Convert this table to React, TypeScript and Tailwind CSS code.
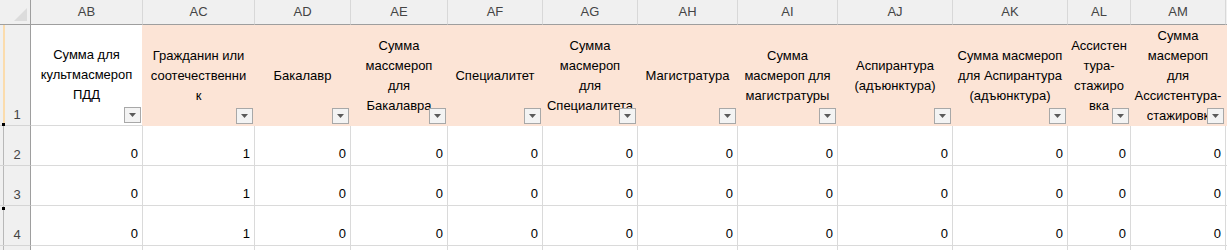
import React from 'react';

type Col = { letter: string; title: string[]; peach: boolean; values: number[] };

const cols: Col[] = [
  { letter: 'AB', title: ['Сумма для', 'культмасмероп', 'ПДД'], peach: false, values: [0, 0, 0] },
  { letter: 'AC', title: ['Гражданин или', 'соотечественни', 'к'], peach: true, values: [1, 1, 1] },
  { letter: 'AD', title: ['Бакалавр'], peach: true, values: [0, 0, 0] },
  { letter: 'AE', title: ['Сумма', 'массмероп', 'для', 'Бакалавра'], peach: true, values: [0, 0, 0] },
  { letter: 'AF', title: ['Специалитет'], peach: true, values: [0, 0, 0] },
  { letter: 'AG', title: ['Сумма', 'масмероп', 'для', 'Специалитета'], peach: true, values: [0, 0, 0] },
  { letter: 'AH', title: ['Магистратура'], peach: true, values: [0, 0, 0] },
  { letter: 'AI', title: ['Сумма', 'масмероп для', 'магистратуры'], peach: true, values: [0, 0, 0] },
  { letter: 'AJ', title: ['Аспирантура', '(адъюнктура)'], peach: true, values: [0, 0, 0] },
  { letter: 'AK', title: ['Сумма масмероп', 'для Аспирантура', '(адъюнктура)'], peach: true, values: [0, 0, 0] },
  { letter: 'AL', title: ['Ассистен', 'тура-', 'стажиро', 'вка'], peach: true, values: [0, 0, 0] },
  { letter: 'AM', title: ['Сумма', 'масмероп', 'для', 'Ассистентура-', 'стажировк'], peach: true, values: [0, 0, 0] },
];

function FilterButton() {
  return (
    <div className="absolute right-[1px] bottom-[2px] w-[17px] h-[16px] border border-[#a8a8a8] bg-[#f3f3f3] flex items-center justify-center">
      <svg width="7" height="4" viewBox="0 0 7 4">
        <path d="M0 0h7L3.5 4z" fill="#5a5a5a" />
      </svg>
    </div>
  );
}

function RowHead({ n, h }: { n?: number; h: string }) {
  return (
    <div className={`relative ${h} bg-[#f0f0f0] border-r border-r-[#9e9e9e] border-b border-b-[#d5d5d5] flex items-end justify-center pl-[4px] pb-[1px] text-[13px] text-[#444]`}>
      <div className="absolute left-[3px] top-0 bottom-0 w-px bg-[#b8b8b8]" />
      {n}
    </div>
  );
}

export default function App() {
  return (
    <div
      className="w-[1227px] h-[250px] overflow-hidden bg-white relative"
      style={{ fontFamily: '"Liberation Sans", Arial, sans-serif' }}
    >
      <div className="grid grid-cols-[31px_112px_112px_96px_97px_95px_95px_100px_100px_115px_115px_63px_95px_1fr]">
        {/* column letters */}
        <div className="h-[25px] bg-[#f0f0f0] border-r border-r-[#9e9e9e] border-b border-b-[#9e9e9e] relative">
          <svg className="absolute right-[3px] bottom-[3px]" width="13" height="13" viewBox="0 0 13 13">
            <path d="M13 0v13H0z" fill="#dcdcdc" />
          </svg>
        </div>
        {cols.map((c) => (
          <div key={c.letter} className="h-[25px] bg-[#f0f0f0] border-r border-r-[#d8d8d8] border-b border-b-[#9e9e9e] flex items-center justify-center text-[13px] text-[#444]">
            {c.letter}
          </div>
        ))}
        <div className="h-[25px] bg-[#f0f0f0] border-b border-b-[#9e9e9e]" />

        {/* row 1: titles */}
        <div className="relative">
          <RowHead n={1} h="h-[101px]" />
          <div className="absolute left-[3px] top-0 bottom-0 w-[2px] bg-[#fbdcad]" />
          <div className="absolute left-[2px] bottom-0 w-[3px] h-[3px] bg-black" />
        </div>
        {cols.map((c) => (
          <div
            key={c.letter}
            className={`relative h-[101px] overflow-hidden flex flex-col items-center justify-center text-center text-[13px] leading-[20px] text-black whitespace-nowrap ${
              c.peach ? 'bg-[#fce4d6] border-r border-r-[#fce4d6]' : 'bg-white border-r border-r-[#fce4d6] border-b border-b-[#dadada]'
            }`}
          >
            {c.title.map((t, i) => (
              <span key={i}>{t}</span>
            ))}
            <FilterButton />
          </div>
        ))}
        <div className="h-[101px] bg-[#fce4d6]" />

        {/* data rows */}
        {[2, 3, 4].map((r, ri) => (
          <React.Fragment key={r}>
            <div className="relative">
              <RowHead n={r} h="h-[40px]" />
              {r === 4 && <div className="absolute left-[2px] top-[1px] w-[3px] h-[3px] bg-black" />}
            </div>
            {cols.map((c) => (
              <div key={c.letter} className="h-[40px] border-r border-b border-[#dadada] flex items-end justify-end pr-[4px] pb-[2px] text-[13px] text-black">
                {c.values[ri]}
              </div>
            ))}
            <div className="h-[40px] border-b border-[#dadada]" />
          </React.Fragment>
        ))}

        {/* row 5 partial */}
        <RowHead h="h-[40px]" />
        {cols.map((c) => (
          <div key={c.letter} className="h-[40px] border-r border-[#dadada]" />
        ))}
        <div className="h-[40px]" />
      </div>
    </div>
  );
}
